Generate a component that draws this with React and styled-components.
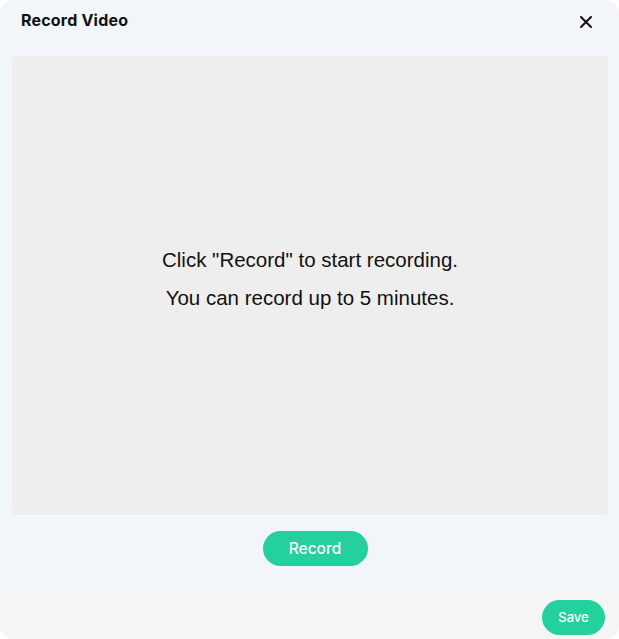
import React from 'react';
import styled, { createGlobalStyle } from 'styled-components';

const GlobalStyle = createGlobalStyle`
	html, body {
		margin: 0;
		padding: 0;
		background: #ffffff;
	}
`;

const Modal = styled.div`
	width: 619px;
	height: 639px;
	box-sizing: border-box;
	display: flex;
	flex-direction: column;
	background: #f2f5fa;
	border-radius: 14px;
	overflow: hidden;
	font-family: Inter, "Noto Sans", sans-serif;
`;

const Header = styled.div`
	display: flex;
	align-items: center;
	justify-content: space-between;
	height: 40px;
	padding: 0 26px 0 21px;
`;

const Title = styled.h2`
	margin: 0;
	font-size: 16px;
	font-weight: 700;
	color: #111111;
	letter-spacing: 0.2px;
`;

const CloseButton = styled.button`
	display: flex;
	align-items: center;
	justify-content: center;
	width: 14px;
	height: 14px;
	padding: 0;
	margin-top: 3px;
	border: none;
	background: none;
	cursor: pointer;
`;

const Body = styled.div`
	flex: 1;
	display: flex;
	flex-direction: column;
	align-items: center;
	padding: 16px 11px 0 12px;
`;

const Preview = styled.div`
	align-self: stretch;
	height: 459px;
	display: flex;
	flex-direction: column;
	align-items: center;
	justify-content: center;
	gap: 15px;
	padding-bottom: 14px;
	box-sizing: border-box;
	background: #eeeeee;
	border-radius: 4px;
	font-family: "Liberation Sans", Arial, sans-serif;
	font-size: 20.5px;
	color: #111111;
`;

const Line = styled.p`
	margin: 0;
	line-height: 23px;
`;

const Pill = styled.button`
	border: none;
	border-radius: 999px;
	background: #25d09f;
	color: #ffffff;
	font-family: Inter, "Noto Sans", sans-serif;
	font-weight: 500;
	cursor: pointer;
	height: 35px;
	width: ${p => p.$width}px;
	font-size: ${p => p.$size}px;
	padding: 0;
`;

const RecordRow = styled.div`
	margin-top: 16px;
	margin-left: 10px;
`;

const Footer = styled.div`
	height: 51px;
	flex-shrink: 0;
	display: flex;
	align-items: center;
	justify-content: flex-end;
	padding: 7px 14px 0 0;
	box-sizing: border-box;
	background: #f5f5f5;
`;

const App = () => {
	return (
		<>
			<GlobalStyle />
			<Modal>
				<Header>
					<Title>Record Video</Title>
					<CloseButton aria-label="Close">
						<svg width="12" height="12" viewBox="0 0 12 12">
							<path d="M1 1L11 11M11 1L1 11" stroke="#111" strokeWidth="2" strokeLinecap="round" />
						</svg>
					</CloseButton>
				</Header>
				<Body>
					<Preview>
						<Line>Click "Record" to start recording.</Line>
						<Line>You can record up to 5 minutes.</Line>
					</Preview>
					<RecordRow>
						<Pill $width={105} $size={15.5}>Record</Pill>
					</RecordRow>
				</Body>
				<Footer>
					<Pill $width={63} $size={13}>Save</Pill>
				</Footer>
			</Modal>
		</>
	);
};

export default App;
